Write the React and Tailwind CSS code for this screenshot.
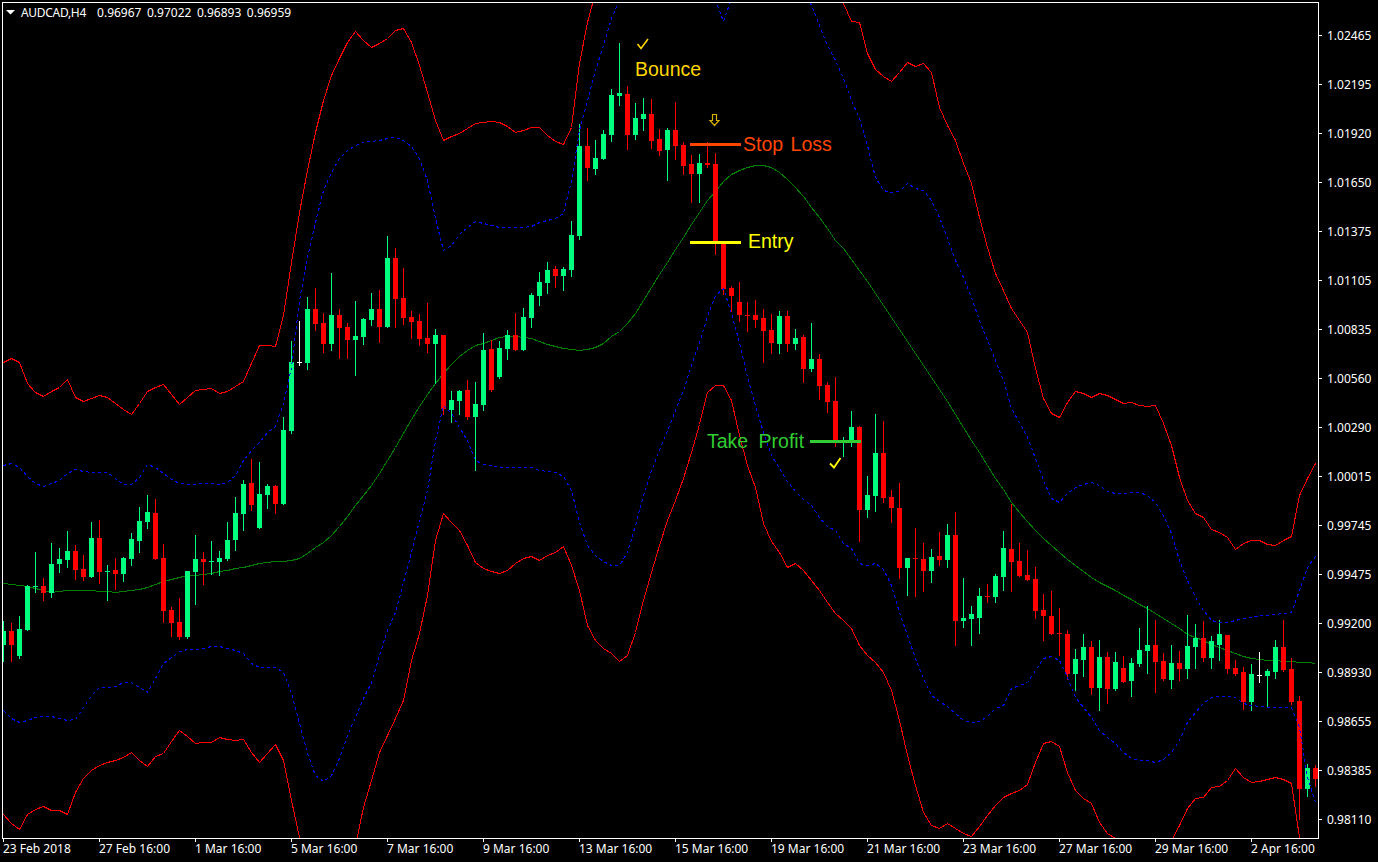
import React from 'react';

// [type, high, bodyTop, bodyBottom, low] in screen pixels
const candles = [
  ['g',621,631,645,661],['r',623,631,645,661],['g',616,629,656,658],['g',585,586,630,630],['g',552,586,586,592],
  ['r',578,586,593,600],['g',543,564,593,597],['g',548,559,564,572],['g',531,551,560,567],['r',545,551,570,579],
  ['r',555,569,577,580],['g',522,538,577,577],['r',520,538,572,583],['g',565,571,571,600],['r',558,570,574,589],
  ['g',557,558,574,581],['g',533,539,559,565],['g',507,521,541,552],['g',495,512,522,528],['r',499,513,559,559],
  ['r',544,558,611,622],['r',607,610,623,636],['r',598,622,637,639],['g',571,571,637,638],['g',535,559,572,604],
  ['r',552,559,562,584],['g',541,561,561,574],['g',551,558,562,575],['g',522,540,559,560],['g',497,513,540,550],
  ['g',480,484,514,530],['r',459,483,505,510],['g',462,494,528,528],['g',484,486,495,508],['r',485,486,504,513],
  ['g',417,430,504,504],['g',341,362,431,433],['w',321,362,362,365],['g',297,309,363,369],['r',288,309,324,330],
  ['r',313,323,344,352],['g',273,315,344,350],['r',309,315,328,358],['r',323,327,340,358],['g',301,336,340,375],
  ['g',318,319,337,344],['g',293,309,320,325],['r',290,309,327,342],['g',236,258,327,327],['r',248,258,299,327],
  ['r',268,298,318,324],['r',311,317,322,338],['r',314,321,339,345],['r',303,338,344,352],['g',329,335,344,383],
  ['r',335,335,409,414],['g',391,400,410,422],['g',390,391,401,414],['r',380,390,417,419],['g',382,404,417,470],
  ['g',333,350,405,410],['r',340,349,390,391],['g',341,348,377,378],['g',330,335,349,359],['r',313,335,350,350],
  ['g',308,317,350,350],['g',293,295,318,327],['g',272,282,296,305],['g',262,270,283,293],['r',266,269,276,287],
  ['g',267,269,276,290],['g',221,235,270,276],['g',124,146,236,239],['r',128,146,168,180],['g',140,158,169,174],
  ['g',130,134,159,159],['g',89,95,135,141],['g',43,93,96,105],['r',86,94,135,149],['g',103,118,135,139],
  ['g',98,114,119,130],['r',99,114,141,148],['r',129,139,151,155],['g',128,130,150,180],['r',102,130,146,159],
  ['r',142,145,166,174],['r',155,164,174,202],['g',154,163,174,202],['r',142,163,165,167],['r',153,164,242,254],
  ['r',242,242,289,294],['r',286,288,296,311],['r',282,302,315,321],['r',302,315,315,331],['r',300,315,320,327],
  ['r',309,318,331,362],['r',314,330,343,353],['g',311,316,344,353],['r',311,316,344,351],['g',329,338,344,349],
  ['r',335,337,369,382],['g',323,359,369,371],['r',354,359,386,399],['r',382,385,402,412],['r',377,401,441,446],
  ['g',437,440,440,456],['g',411,427,442,446],['r',426,427,510,541],['g',476,495,510,517],['g',414,453,496,511],
  ['r',421,453,498,502],['r',490,497,508,522],['r',483,508,568,578],['g',558,558,568,595],['r',528,558,558,596],
  ['r',543,559,571,591],['g',549,557,571,582],['r',532,556,560,565],['g',524,535,560,567],['r',512,535,621,645],
  ['g',578,618,621,627],['g',606,614,619,645],['g',588,596,618,633],['r',584,596,596,602],['g',574,576,597,602],
  ['g',531,548,577,590],['r',504,549,562,591],['r',543,561,576,576],['r',550,575,580,580],['r',567,579,611,618],
  ['r',594,610,616,640],['r',591,616,634,634],['r',608,633,633,655],['r',630,634,674,679],['g',649,659,674,690],
  ['g',634,647,660,676],['r',641,647,688,694],['g',640,657,688,710],['r',652,657,689,703],['g',652,662,689,690],
  ['r',656,668,682,682],['g',658,663,681,696],['g',628,650,664,666],['g',606,645,651,673],['r',620,645,662,692],
  ['r',653,661,679,680],['g',645,663,680,688],['r',651,663,669,680],['g',615,646,669,678],['g',624,638,647,668],
  ['r',621,638,658,661],['g',636,641,658,668],['g',620,634,645,660],['r',635,635,669,673],['r',660,668,674,675],
  ['r',667,672,702,709],['g',664,674,702,710],['w',652,675,675,682],['g',669,671,676,707],['g',640,647,672,678],
  ['r',620,647,670,671],['r',658,669,702,704],['r',696,701,789,819],['g',764,768,789,796],['r',765,768,779,786],
];

const candleColors = { g: '#00ff7f', r: '#ff0000', w: '#ffffff' };

const redUpper = [
  362,358,362,383,392,396,391,387,379,397,
  401,398,395,397,403,409,414,403,391,387,
  384,394,404,397,390,389,388,393,391,386,
  381,363,345,345,346,315,262,212,170,132,
  100,75,58,42,31,40,47,43,38,30,
  28,42,65,92,120,140,136,133,128,123,
  122,121,122,126,132,130,127,127,135,141,
  144,127,63,22,-8,-30,-30,-30,-30,-30,
  -30,-30,-30,-30,-30,-30,-30,-30,-30,-30,
  -30,-30,-30,-30,-30,-30,-30,-30,-30,-30,
  -30,-30,-30,-30,-15,3,21,22,53,69,
  76,81,72,62,66,63,72,107,125,140,
  163,183,217,247,273,290,308,320,332,368,
  398,413,417,402,391,393,397,393,395,399,
  403,402,405,406,405,423,445,477,500,513,
  517,529,532,537,549,543,540,540,544,545,
  540,536,495,478,463,
];

const blueUpper = [
  465,463,467,476,483,486,483,480,473,469,
  471,472,472,472,478,484,484,477,464,467,
  473,479,483,484,484,483,483,484,482,475,
  460,450,442,432,426,403,367,300,257,222,
  190,172,158,150,145,142,141,140,138,137,
  140,146,158,180,218,250,245,234,227,221,
  223,225,227,227,227,227,226,222,220,218,
  213,180,130,100,70,45,18,0,-30,-30,
  -30,-30,-30,-30,-30,-30,-30,-30,-30,0,
  21,-2,-30,-30,-30,-30,-30,-30,-30,-30,
  -10,5,25,45,60,78,100,118,145,177,
  190,192,191,183,188,190,200,217,238,260,
  277,297,320,340,360,380,408,422,437,458,
  480,498,502,493,487,484,482,485,491,493,
  493,492,492,495,502,515,533,560,580,597,
  610,620,622,622,620,618,617,615,615,614,
  613,612,590,567,556,
];

const movingAvg = [
  583,584,585,586,588,590,592,591,590,590,
  590,590,591,591,592,591,590,589,587,584,
  581,579,577,575,575,574,573,571,570,568,
  567,565,563,562,561,561,560,558,553,547,
  542,535,526,516,505,495,485,473,460,447,
  433,419,406,394,383,373,364,356,350,345,
  343,340,337,336,336,337,338,341,344,346,
  348,349,350,349,347,343,336,331,323,313,
  300,287,274,262,249,237,224,212,200,191,
  181,174,170,167,165,165,167,172,179,187,
  196,207,217,228,240,248,259,270,281,293,
  305,317,329,341,353,365,377,389,401,414,
  427,440,452,465,478,489,502,512,521,530,
  538,545,552,559,565,571,577,582,586,590,
  595,599,604,608,613,618,623,628,634,637,
  640,644,647,650,653,656,658,659,660,660,
  661,661,662,662,663,
];

const blueLower = [
  710,718,722,720,717,716,716,718,720,719,
  707,695,687,687,686,682,682,687,692,678,
  663,657,651,649,649,648,646,646,648,650,
  653,663,667,667,667,672,693,723,753,775,
  781,775,758,735,717,698,682,655,630,612,
  582,552,520,490,440,405,413,427,440,460,
  464,465,467,467,467,467,467,470,471,472,
  476,490,522,545,555,561,565,565,552,525,
  495,470,450,430,410,390,365,342,316,295,
  288,313,342,377,405,432,455,468,481,491,
  499,505,517,526,530,543,548,563,565,563,
  569,585,612,635,658,678,695,701,706,713,
  720,722,721,716,708,705,688,685,682,670,
  658,656,660,677,697,707,717,730,737,743,
  752,758,760,760,762,759,752,740,722,712,
  703,697,696,696,697,703,705,706,707,707,
  707,707,727,777,802,
];

const redLower = [
  814,823,829,814,809,806,810,810,814,792,
  778,770,765,762,760,757,752,760,766,756,
  753,741,730,736,743,742,742,737,739,740,
  739,752,762,753,744,760,800,837,873,900,
  900,900,900,900,845,807,780,752,735,718,
  700,660,633,595,540,513,522,530,545,562,
  568,571,573,570,563,558,556,560,555,552,
  546,565,590,625,640,648,653,661,655,632,
  600,572,545,520,500,478,452,424,392,385,
  385,400,435,465,487,523,541,552,567,563,
  570,580,590,602,613,620,628,645,655,662,
  672,690,720,755,785,812,825,828,823,828,
  833,836,826,815,805,797,793,790,784,762,
  743,741,746,772,790,798,803,822,833,838,
  860,860,860,860,860,860,840,825,808,798,
  797,787,786,780,768,777,782,781,779,777,
  779,783,837,880,900,
];

const prices = [
  '1.02465','1.02195','1.01920','1.01650','1.01375','1.01105','1.00835','1.00560','1.00290',
  '1.00015','0.99745','0.99475','0.99200','0.98930','0.98655','0.98385','0.98110',
];

const dates = [
  '23 Feb 2018','27 Feb 16:00','1 Mar 16:00','5 Mar 16:00','7 Mar 16:00','9 Mar 16:00','13 Mar 16:00',
  '15 Mar 16:00','19 Mar 16:00','21 Mar 16:00','23 Mar 16:00','27 Mar 16:00','29 Mar 16:00','2 Apr 16:00',
];

const toPoints = (values) => values.map((y, i) => `${3.5 + 8 * i},${y + 0.5}`).join(' ');

const Candle = ({ candle, index }) => {
  const [type, high, top, bottom, low] = candle;
  const x = 3 + 8 * index;
  const color = candleColors[type];
  return (
    <g fill={color}>
      <rect x={x} y={high} width={1} height={low - high + 1} />
      <rect x={x - 2} y={top} width={5} height={Math.max(bottom - top, 1)} />
    </g>
  );
};

const Chart = () => (
  <svg viewBox="3 3 1315 835" className="block h-[835px] w-[1315px]" shapeRendering="crispEdges" fill="none">
    <polyline points={toPoints(movingAvg)} stroke="#008000" />
    {candles.map((c, i) => <Candle key={i} candle={c} index={i} />)}
    <polyline points={toPoints(redUpper)} stroke="#ff0000" />
    <polyline points={toPoints(redLower)} stroke="#ff0000" />
    <polyline points={toPoints(blueUpper)} stroke="#0000ff" strokeDasharray="3 3" />
    <polyline points={toPoints(blueLower)} stroke="#0000ff" strokeDasharray="3 3" />

    {/* trade levels */}
    <rect x={690} y={143} width={51} height={3} fill="#ff4500" />
    <rect x={690} y={241} width={51} height={3} fill="#ffff00" />
    <rect x={810} y={440} width={51} height={3} fill="#32cd32" />

    {/* markers */}
    <g shapeRendering="auto">
      <path d="M6 10h9l-4.5 4.5z" fill="#ffffff" />
      <path d="M637.5 44l3.5 4.5 7-9.5" stroke="#ffd700" strokeWidth="1.6" />
      <path d="M830 463.5l4 4 6.5-9.5" stroke="#ffff00" strokeWidth="1.8" />
      <path d="M712.5 114.5h4v6h2.5l-4.5 5-4.5-5h2.5z" stroke="#d4b000" strokeWidth="1.2" />
    </g>
  </svg>
);

export default function App() {
  return (
    <div className="h-[862px] w-[1378px] overflow-hidden bg-black font-['Noto_Sans',sans-serif] text-[12px] leading-[14px] text-white">
      <div className="flex h-[839px] pl-[2px] pt-[2px]">
        <div className="relative h-[837px] w-[1317px] shrink-0 border border-white">
          <Chart />
          <div className="absolute left-[18px] top-[3px] whitespace-pre [word-spacing:2.4px]">
            <span className="tracking-[-0.3px]">AUDCAD,H4</span>  0.96967 0.97022 0.96893 0.96959
          </div>
          <div className="font-['Liberation_Sans',sans-serif] text-[19.5px] leading-[20px]">
            <div className="absolute left-[632px] top-[56px] text-[#ffd700]">Bounce</div>
            <div className="absolute left-[740px] top-[131px] text-[#ff4500] [word-spacing:2px]">Stop Loss</div>
            <div className="absolute left-[745px] top-[228px] text-[#ffff00]">Entry</div>
            <div className="absolute left-[704px] top-[428px] text-[#32cd32] [word-spacing:5px]">Take Profit</div>
          </div>
        </div>
        <div className="flex flex-col pt-[9px]">
          {prices.map((p) => (
            <div key={p} className="flex h-[49px] shrink-0 items-center">
              <div className="h-px w-[3px] bg-white" />
              <span className="ml-[5px]">{p}</span>
            </div>
          ))}
        </div>
      </div>
      <div className="flex pl-[3px]">
        {dates.map((d) => (
          <div key={d} className="w-[96px] shrink-0 whitespace-nowrap">
            <div className="h-[3px] w-px bg-white" />
            <div>{d}</div>
          </div>
        ))}
      </div>
    </div>
  );
}
